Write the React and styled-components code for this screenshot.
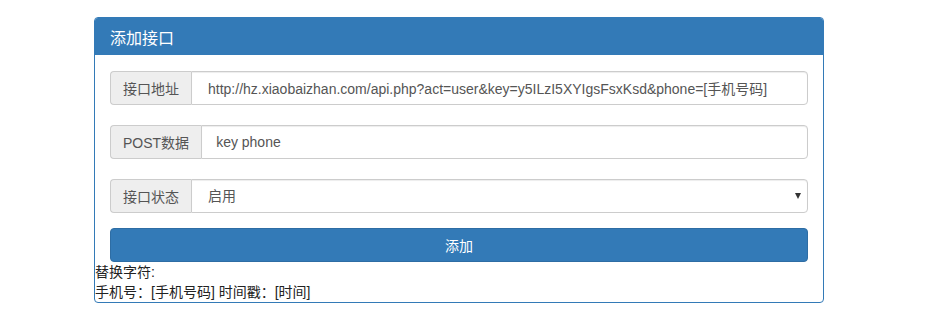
import React, { useState } from 'react'
import styled, { createGlobalStyle } from 'styled-components'

const GlobalStyle = createGlobalStyle`
    body {
        margin: 0;
        background: #fff;
        font-family: "Liberation Sans", "Noto Sans CJK SC", sans-serif;
        font-size: 14px;
        color: #333;
    }
`

const Page = styled.div`
    padding: 17px 0 0 94px;
`
const Panel = styled.div`
    width: 730px;
    box-sizing: border-box;
    border: 1px solid #337ab7;
    border-radius: 4px;
    background: #fff;
`
const Heading = styled.div`
    height: 37px;
    box-sizing: border-box;
    padding: 0 15px;
    display: flex;
    align-items: center;
    background: #337ab7;
    color: #fff;
    font-size: 16px;
    border-radius: 3px 3px 0 0;
`
const Body = styled.div`
    padding: 16px 15px 0;
`
const InputGroup = styled.div`
    display: flex;
    height: 34px;
    margin-bottom: ${(p) => p.gap || 20}px;
    position: relative;
`
const Addon = styled.span`
    display: flex;
    align-items: center;
    padding: 0 12px;
    background: #eee;
    border: 1px solid #ccc;
    border-right: 0;
    border-radius: 4px 0 0 4px;
    color: #555;
    white-space: nowrap;
`
const Input = styled.input`
    flex: 1;
    min-width: 0;
    height: 34px;
    box-sizing: border-box;
    padding: 0 12px 0 ${(p) => p.indent || 16}px;
    border: 1px solid #ccc;
    border-radius: 0 4px 4px 0;
    font-family: inherit;
    font-size: 14px;
    color: #555;
    outline: none;
    box-shadow: inset 0 1px 1px rgba(0, 0, 0, 0.075);
`
const Select = styled.select`
    flex: 1;
    height: 34px;
    box-sizing: border-box;
    padding: 0 12px 0 16px;
    border: 1px solid #ccc;
    border-radius: 0 4px 4px 0;
    background: #fff;
    font-family: inherit;
    font-size: 14px;
    color: #555;
    appearance: none;
    outline: none;
    box-shadow: inset 0 1px 1px rgba(0, 0, 0, 0.075);
`
const Caret = styled.span`
    position: absolute;
    right: 7px;
    top: 14px;
    width: 0;
    height: 0;
    border-left: 3.5px solid transparent;
    border-right: 3.5px solid transparent;
    border-top: 6px solid #333;
    pointer-events: none;
`
const Button = styled.button`
    display: block;
    width: 100%;
    height: 34px;
    border: 1px solid #2e6da4;
    border-radius: 4px;
    background: #337ab7;
    color: #fff;
    font-family: inherit;
    font-size: 14px;
    cursor: pointer;
`
const Note = styled.div`
    line-height: 20px;
    color: #222;
`

const App = () => {
    const [url, setUrl] = useState('http://hz.xiaobaizhan.com/api.php?act=user&key=y5ILzI5XYIgsFsxKsd&phone=[手机号码]')
    const [post, setPost] = useState('key phone')
    const [status, setStatus] = useState('1')
    return (
        <Page>
            <GlobalStyle />
            <Panel>
                <Heading>添加接口</Heading>
                <Body>
                    <InputGroup>
                        <Addon>接口地址</Addon>
                        <Input value={url} onChange={(e) => setUrl(e.target.value)} />
                    </InputGroup>
                    <InputGroup>
                        <Addon>POST数据</Addon>
                        <Input indent={14} value={post} onChange={(e) => setPost(e.target.value)} />
                    </InputGroup>
                    <InputGroup gap={15}>
                        <Addon>接口状态</Addon>
                        <Select value={status} onChange={(e) => setStatus(e.target.value)}>
                            <option value="1">启用</option>
                            <option value="0">禁用</option>
                        </Select>
                        <Caret />
                    </InputGroup>
                    <Button>添加</Button>
                </Body>
                <Note>替换字符:</Note>
                <Note>手机号：[手机号码] 时间戳：[时间]</Note>
            </Panel>
        </Page>
    )
}

export default App
